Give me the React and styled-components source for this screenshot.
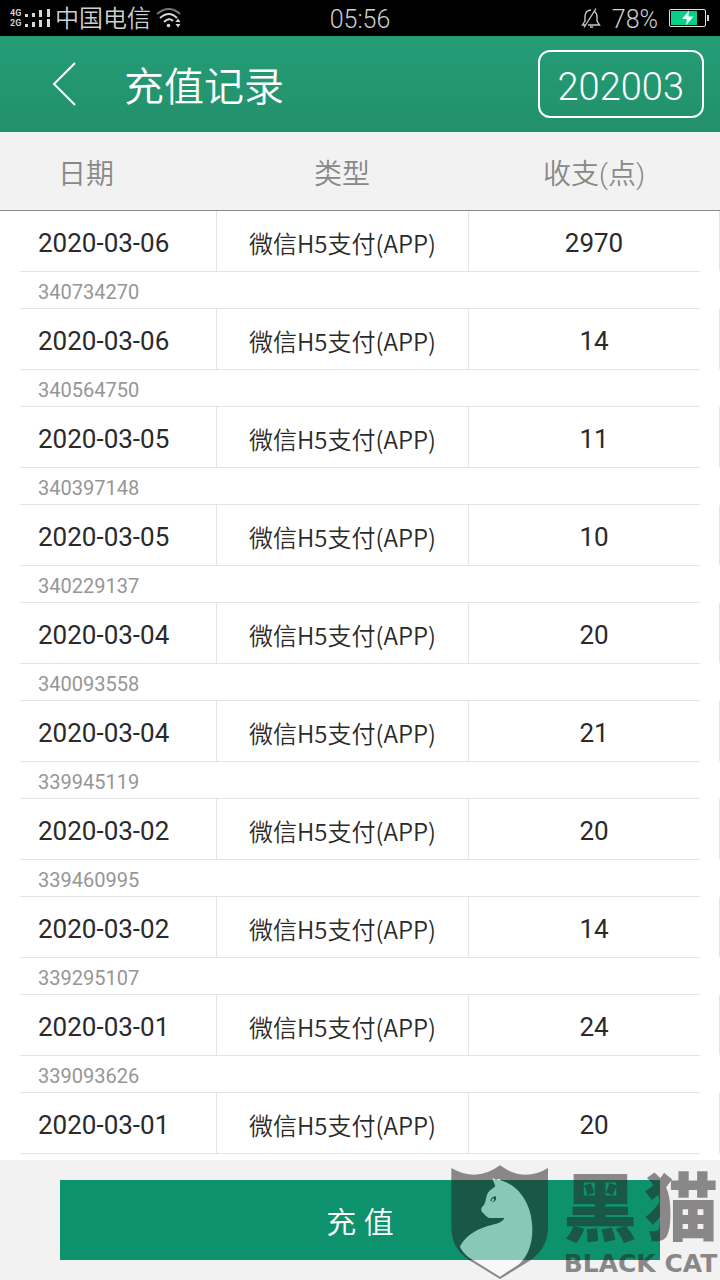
import React from "react";
import styled, { createGlobalStyle } from "styled-components";

const GlobalStyle = createGlobalStyle`
  *, *::before, *::after { box-sizing: border-box; }
  body {
    margin: 0;
    background: #ffffff;
    color: #2a2a2a;
    font-family: Roboto, "Noto Sans CJK SC", sans-serif;
  }
  button { font: inherit; color: inherit; cursor: pointer; }
`;

const Page = styled.div`
  display: flex;
  flex-direction: column;
  min-height: 100vh;
`;

const StatusBar = styled.div`
  display: grid;
  grid-template-columns: 1fr auto 1fr;
  align-items: center;
  height: 36px;
  padding: 0 10px;
  background: #000000;
  color: #cfcfcf;
  font-size: 25px;
  font-weight: 350;
  line-height: 36px;
`;

const StatusText = styled.span`
  padding-top: 3px;
  font-size: ${({ $size }) => $size || 25}px;
  line-height: 33px;
`;

const StatusGroup = styled.div`
  display: flex;
  align-items: center;
  justify-content: ${({ $end }) => ($end ? "flex-end" : "flex-start")};
  gap: ${({ $gap }) => $gap}px;
`;

const NetworkLabels = styled.div`
  display: flex;
  flex-direction: column;
  width: 13px;
  font-size: 9px;
  font-weight: 700;
  line-height: 10px;
`;

const Signal = styled.div`
  display: flex;
  align-items: center;
  gap: 2px;
`;

const Icon = styled.svg`
  display: block;
  flex: none;
`;

const Header = styled.header`
  display: flex;
  align-items: center;
  height: 96px;
  padding: 0 16px 0 44px;
  background: linear-gradient(#249d76, #22906b);
  color: #ffffff;
`;

const BackButton = styled.button`
  width: 40px;
  height: 60px;
  padding: 8px;
  border: 0;
  background: none;
`;

const Title = styled.h1`
  flex: 1;
  margin: 0;
  padding: 8px 0 0 40px;
  font-size: 40px;
  font-weight: 350;
  line-height: 56px;
`;

const MonthButton = styled.button`
  height: 68px;
  padding: 6px 18px 0;
  border: 2px solid #ffffff;
  border-radius: 12px;
  background: none;
  && { font-size: 38px; font-weight: 350; }
`;

const Records = styled.main`
  flex: 1;
`;

const Table = styled.table`
  width: 100%;
  table-layout: fixed;
  border-collapse: separate;
  border-spacing: 0;
`;

const HeadCell = styled.th`
  width: ${({ $width }) => $width};
  height: 79px;
  padding: ${({ $first }) => ($first ? "8px 0 0 58px" : "8px 0 0")};
  border-bottom: 1px solid #8a8a8a;
  background: #f2f2f2;
  color: #888888;
  font-size: 28px;
  font-weight: 350;
  line-height: 40px;
  text-align: ${({ $first }) => ($first ? "left" : "center")};
`;

const Cell = styled.td`
  height: 60px;
  padding: 4px 0 0;
  border-left: 1px solid #e5e5e5;
  font-size: 26px;
  line-height: 36px;
  text-align: center;
  white-space: nowrap;
`;

const DateCell = styled(Cell)`
  padding-left: 38px;
  border-left: 0;
  text-align: left;
`;

const TypeCell = styled(Cell)`
  font-family: "Noto Sans CJK SC", sans-serif;
  font-size: 24px;
  font-weight: 350;
`;

const PointsCell = styled(Cell)`
  border-right: 1px solid #e5e5e5;
`;

const OrderCell = styled.td`
  padding: 0 20px;
`;

const OrderNumber = styled.div`
  height: 38px;
  padding: 2px 18px 0;
  border-top: 1px solid #e5e5e5;
  border-bottom: 1px solid #e5e5e5;
  color: #969696;
  font-size: 20px;
  line-height: 36px;
`;

const ListEnd = styled.div`
  height: 7px;
  border-top: 1px solid #e5e5e5;
`;

const Footer = styled.footer`
  position: relative;
  padding: 20px 60px;
  background: #f2f2f2;
`;

const RechargeButton = styled.button`
  display: block;
  width: 100%;
  height: 80px;
  padding: 0;
  border: 0;
  background: #0e916d;
  && { color: #ffffff; font-size: 30px; font-weight: 350; }
`;

const Watermark = styled.svg`
  position: absolute;
  right: 0;
  bottom: 0;
  width: 280px;
  height: 140px;
  pointer-events: none;
`;

const records = [
  ["2020-03-06", 2970, "340734270"],
  ["2020-03-06", 14, "340564750"],
  ["2020-03-05", 11, "340397148"],
  ["2020-03-05", 10, "340229137"],
  ["2020-03-04", 20, "340093558"],
  ["2020-03-04", 21, "339945119"],
  ["2020-03-02", 20, "339460995"],
  ["2020-03-02", 14, "339295107"],
  ["2020-03-01", 24, "339093626"],
  ["2020-03-01", 20, null],
];

const SignalBars = () => (
  <Icon width="25" height="18" viewBox="0 0 25 18" fill="#d8d8d8">
    <path d="M0 5h3v3H0zM7 4h3v4H7zM14 1h3v7h-3zM22 0h3v8h-3zM0 15h3v3H0zM7 13h3v5H7zM14 11h3v7h-3zM22 10h3v8h-3z" />
  </Icon>
);

const WifiIcon = () => (
  <Icon width="26" height="20" viewBox="0 0 26 20" fill="none" strokeWidth="2">
    <path d="M1 6Q13-4 24 6" stroke="#777777" />
    <path d="M4 10Q13 2 21 10M8 14Q13 9 17 13" stroke="#d8d8d8" />
    <circle cx="12.500" cy="17.500" r="1.800" fill="#d8d8d8" />
    <path d="M19.500 14l2.500-3.500 2.500 3.500zM19.500 16h5l-2.500 3.500z" fill="#d8d8d8" />
  </Icon>
);

const MutedBellIcon = () => (
  <Icon width="20" height="20" viewBox="0 0 20 20" fill="none" stroke="#c8c8c8" strokeWidth="1.400">
    <path d="M4 13.500V8Q4.500 2.500 10 2M13 3Q16 5 16 9V13L18.500 17H7M4 13L1.500 17H4M15 0.500L3 19.500M9 19h3" />
  </Icon>
);

const BatteryIcon = () => (
  <Icon width="41" height="20" viewBox="0 0 41 20">
    <rect x="0.500" y="1.500" width="36" height="17" rx="1.500" fill="none" stroke="#e0e0e0" />
    <rect x="2" y="3" width="26" height="14" fill="#08cf87" />
    <path d="M20 2.500L13 11h5l-1 6.500 7.500-9h-5z" fill="#e6fff5" />
    <path d="M38 7h2v6h-2z" fill="#d8d8d8" />
  </Icon>
);

const BlackCatMark = () => (
  <Watermark viewBox="0 0 840 420" opacity="0.5">
    <path
      fill="#251f21"
      d="M34 84Q110 128 180 76Q252 128 324 84V258C324 318 296 344 262 367L180 417L98 367C62 344 34 318 34 258Z"
    />
    <path
      fill="#ffffff"
      d="M157 114L168 120L177 116L182 121C240 137 277 196 277 268C277 316 262 350 238 372L180 410L95 358C76 346 64 332 60 319C80 282 116 266 152 256C174 250 188 246 193 234L148 234C138 230 138 227 126 216C122 208 124 202 130 197C139 186 136 170 145 157C151 149 160 144 166 139Z"
    />
    <path
      fill="#251f21"
      d="M151 184Q152 171 168 169Q171 185 155 188L160 184Q164 179 161 174Q154 176 155 183Z"
    />
    <g fill="#251f21">
      <text y="284" fontFamily="Noto Sans CJK SC, sans-serif" fontSize="222" fontWeight="900">
        <tspan x="370">黑</tspan>
        <tspan x="613">猫</tspan>
      </text>
      <text x="371" y="397" fontFamily="DejaVu Sans, sans-serif" fontSize="75" fontWeight="700">BLACK CAT</text>
    </g>
  </Watermark>
);

export default function App() {
  return (
    <>
      <GlobalStyle />
      <Page>
        <StatusBar>
          <StatusGroup $gap={5}>
            <Signal>
              <NetworkLabels>
                <span>4G</span>
                <span>2G</span>
              </NetworkLabels>
              <SignalBars />
            </Signal>
            <StatusText $size={24}>中国电信</StatusText>
            <WifiIcon />
          </StatusGroup>
          <StatusText>05:56</StatusText>
          <StatusGroup $end $gap={11}>
            <MutedBellIcon />
            <StatusText>78%</StatusText>
            <BatteryIcon />
          </StatusGroup>
        </StatusBar>

        <Header>
          <BackButton aria-label="返回">
            <Icon width="24" height="44" viewBox="0 0 24 44" fill="none" stroke="#ffffff" strokeWidth="2">
              <path d="M23 1L2 22L23 43" />
            </Icon>
          </BackButton>
          <Title>充值记录</Title>
          <MonthButton>202003</MonthButton>
        </Header>

        <Records>
          <Table>
            <thead>
              <tr>
                <HeadCell scope="col" $width="30%" $first>日期</HeadCell>
                <HeadCell scope="col" $width="35%">类型</HeadCell>
                <HeadCell scope="col" $width="35%">收支(点)</HeadCell>
              </tr>
            </thead>
            <tbody>
              {records.map(([date, points, order], index) => (
                <React.Fragment key={index}>
                  <tr>
                    <DateCell>{date}</DateCell>
                    <TypeCell>微信H5支付(APP)</TypeCell>
                    <PointsCell>{points}</PointsCell>
                  </tr>
                  <tr>
                    <OrderCell colSpan={3}>
                      {order ? <OrderNumber>{order}</OrderNumber> : <ListEnd />}
                    </OrderCell>
                  </tr>
                </React.Fragment>
              ))}
            </tbody>
          </Table>
        </Records>

        <Footer>
          <RechargeButton>充 值</RechargeButton>
          <BlackCatMark />
        </Footer>
      </Page>
    </>
  );
}
